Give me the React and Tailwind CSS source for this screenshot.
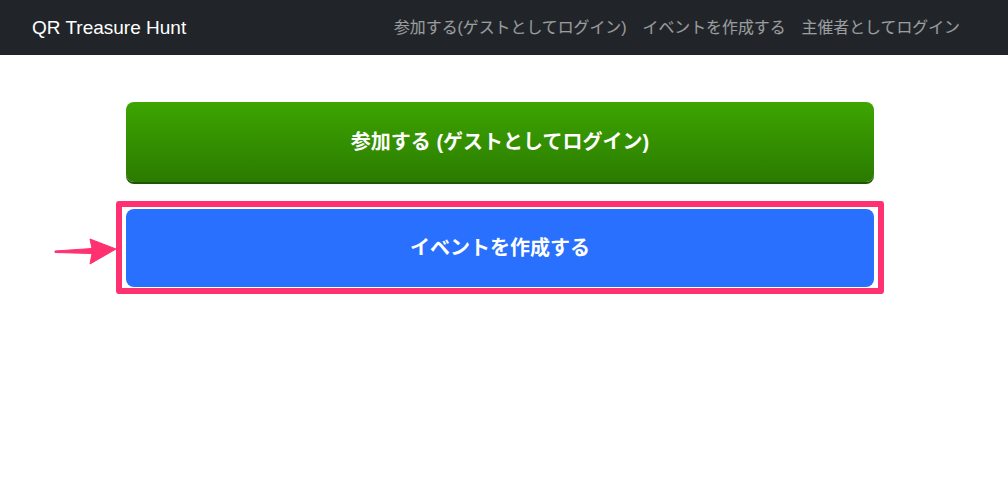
export default function App() {
  const font = { fontFamily: '"Liberation Sans", "Noto Sans CJK JP", Arial, sans-serif' }

  return (
    <div className="min-h-screen bg-white" style={font}>
      {/* Top navbar */}
      <nav className="h-[55px] bg-[#212529] flex items-center justify-between pl-[32px] pr-[40px]">
        <a className="text-white text-[19px] leading-none">QR Treasure Hunt</a>
        <div className="flex items-center text-[15.9px] text-white/55">
          <a className="px-[8px]">参加する(ゲストとしてログイン)</a>
          <a className="px-[8px]">イベントを作成する</a>
          <a className="px-[8px]">主催者としてログイン</a>
        </div>
      </nav>

      <main className="pt-[47px] pl-[126px]">
        <button className="w-[748px] h-[80px] rounded-[8px] bg-gradient-to-b from-[#3da500] to-[#2b7b00] shadow-[0_2px_0_#1d5600] text-white text-[20px] font-bold">
          参加する (ゲストとしてログイン)
        </button>

        {/* Highlighted button with annotation arrow */}
        <div className="relative mt-[19px] -ml-[10px] w-fit border-[6px] border-[#ff3170] rounded-[3px] pt-[2px] pb-[1px] px-[4px]">
          <svg
            className="absolute left-[-68px] top-[29px]"
            width="64"
            height="30"
            viewBox="0 0 64 30"
          >
            <path
              d="M1 15 L38 12.5 L36 3 L62 13 L36 28 L38 17.5 L1 16.5 Z"
              fill="#ff3170"
              stroke="#ff3170"
              strokeWidth="1"
              strokeLinejoin="round"
            />
          </svg>
          <button className="w-[748px] h-[78px] rounded-[8px] bg-[#2970fe] text-white text-[20px] font-bold">
            イベントを作成する
          </button>
        </div>
      </main>
    </div>
  )
}
